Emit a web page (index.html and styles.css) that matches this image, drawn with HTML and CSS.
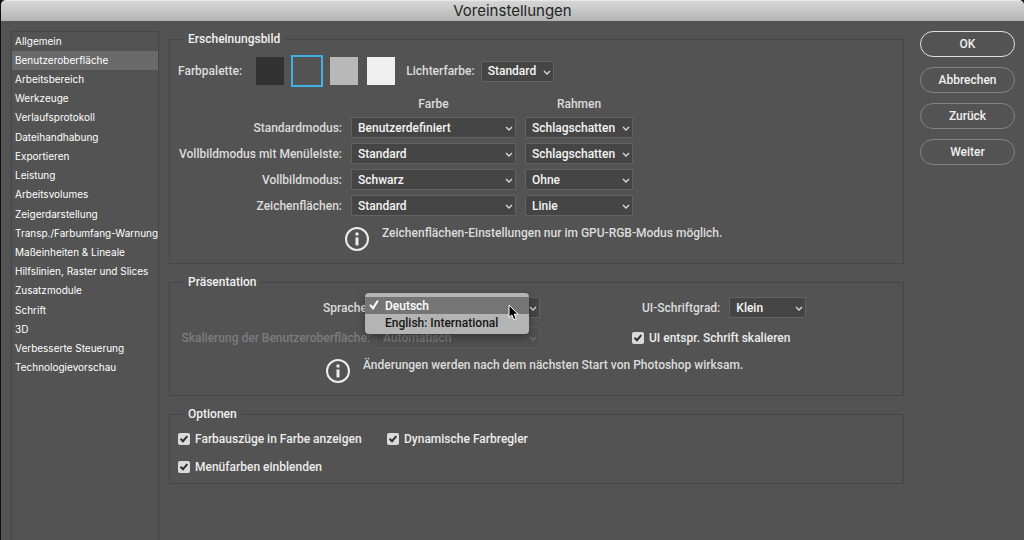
FILE: index.html
```html
<!DOCTYPE html>
<html lang="de">
<head>
<meta charset="utf-8">
<title>Voreinstellungen</title>
<link rel="stylesheet" href="styles.css">
</head>
<body>
<div class="dialog">
  <header class="titlebar"><h1 class="title">Voreinstellungen</h1></header>
  <div class="content">
    <nav class="sidebar">
      <ul class="categories">
        <li><a href="#">Allgemein</a></li>
        <li><a href="#" class="active" aria-current="page">Benutzeroberfläche</a></li>
        <li><a href="#">Arbeitsbereich</a></li>
        <li><a href="#">Werkzeuge</a></li>
        <li><a href="#">Verlaufsprotokoll</a></li>
        <li><a href="#">Dateihandhabung</a></li>
        <li><a href="#">Exportieren</a></li>
        <li><a href="#">Leistung</a></li>
        <li><a href="#">Arbeitsvolumes</a></li>
        <li><a href="#">Zeigerdarstellung</a></li>
        <li><a href="#">Transp./Farbumfang-Warnung</a></li>
        <li><a href="#">Maßeinheiten &amp; Lineale</a></li>
        <li><a href="#">Hilfslinien, Raster und Slices</a></li>
        <li><a href="#">Zusatzmodule</a></li>
        <li><a href="#">Schrift</a></li>
        <li><a href="#">3D</a></li>
        <li><a href="#">Verbesserte Steuerung</a></li>
        <li><a href="#">Technologievorschau</a></li>
      </ul>
    </nav>

    <main class="panels">
      <fieldset class="panel">
        <legend>Erscheinungsbild</legend>
        <div class="palette-row">
          <span id="palette">Farbpalette:</span>
          <div class="swatches" role="radiogroup" aria-labelledby="palette">
            <input type="radio" name="palette" class="swatch swatch-black" aria-labelledby="palette">
            <input type="radio" name="palette" class="swatch swatch-dark" aria-labelledby="palette" checked>
            <input type="radio" name="palette" class="swatch swatch-light" aria-labelledby="palette">
            <input type="radio" name="palette" class="swatch swatch-white" aria-labelledby="palette">
          </div>
          <label for="highlight">Lichterfarbe:</label>
          <select id="highlight" class="select-short"><option>Standard</option></select>
        </div>
        <div class="modes">
          <span></span><span class="head" id="farbe">Farbe</span><span class="head" id="rahmen">Rahmen</span>
          <label for="m1">Standardmodus:</label>
          <select id="m1"><option>Benutzerdefiniert</option></select>
          <select aria-labelledby="rahmen"><option>Schlagschatten</option></select>
          <label for="m2">Vollbildmodus mit Menüleiste:</label>
          <select id="m2"><option>Standard</option></select>
          <select aria-labelledby="rahmen"><option>Schlagschatten</option></select>
          <label for="m3">Vollbildmodus:</label>
          <select id="m3"><option>Schwarz</option></select>
          <select aria-labelledby="rahmen"><option>Ohne</option></select>
          <label for="m4">Zeichenflächen:</label>
          <select id="m4"><option>Standard</option></select>
          <select aria-labelledby="rahmen"><option>Linie</option></select>
        </div>
        <div class="info info-artboards">
          <svg class="info-icon" viewBox="0 0 24 24" aria-hidden="true"><circle cx="12" cy="12" r="11"/><path d="M12 10.400v8"/><circle class="dot" cx="12" cy="7" r="1.700"/></svg>
          <p>Zeichenflächen-Einstellungen nur im GPU-RGB-Modus möglich.</p>
        </div>
      </fieldset>

      <fieldset class="panel">
        <legend>Präsentation</legend>
        <div class="presentation">
          <div class="language">
            <label for="lang">Sprache:</label>
            <div class="language-field">
              <select id="lang"><option>Deutsch</option><option>English: International</option></select>
              <div class="menu" role="menu">
                <button type="button" class="menu-item current" role="menuitemradio" aria-checked="true">
                  <svg class="tick" viewBox="0 0 10 10" aria-hidden="true"><path d="M1.500 5.400 4 8.400 8.400 1.400"/></svg>Deutsch</button>
                <button type="button" class="menu-item" role="menuitemradio" aria-checked="false">English: International</button>
                <svg class="cursor" viewBox="0 0 12 18" aria-hidden="true"><path d="M1 1v12.500l2.800-2.500 2 4.600 2.400-1-2-4.400H10z"/></svg>
              </div>
            </div>
            <label for="scale" class="disabled">Skalierung der Benutzeroberfläche:</label>
            <select id="scale" disabled><option>Automatisch</option></select>
          </div>
          <div class="font-size">
            <div class="font-row">
              <label for="size">UI-Schriftgrad:</label>
              <select id="size"><option>Klein</option></select>
            </div>
            <label class="check"><input type="checkbox" checked>UI entspr. Schrift skalieren</label>
          </div>
        </div>
        <div class="info info-restart">
          <svg class="info-icon" viewBox="0 0 24 24" aria-hidden="true"><circle cx="12" cy="12" r="11"/><path d="M12 10.400v8"/><circle class="dot" cx="12" cy="7" r="1.700"/></svg>
          <p>Änderungen werden nach dem nächsten Start von Photoshop wirksam.</p>
        </div>
      </fieldset>

      <fieldset class="panel">
        <legend>Optionen</legend>
        <div class="options">
          <label class="check"><input type="checkbox" checked>Farbauszüge in Farbe anzeigen</label>
          <label class="check"><input type="checkbox" checked>Dynamische Farbregler</label>
          <label class="check"><input type="checkbox" checked>Menüfarben einblenden</label>
        </div>
      </fieldset>
    </main>

    <div class="actions">
      <button type="button" class="pill primary">OK</button>
      <button type="button" class="pill">Abbrechen</button>
      <button type="button" class="pill">Zurück</button>
      <button type="button" class="pill">Weiter</button>
    </div>
  </div>
</div>
</body>
</html>
```

FILE: styles.css
```css
* { box-sizing: border-box; }

body {
  margin: 0;
  background: #111;
  color: #dcdcdc;
  font: 500 12px/16px Roboto, "Liberation Sans", sans-serif;
}

button, select, input { font: inherit; margin: 0; }
p { margin: 0; }

.dialog {
  display: flex;
  flex-direction: column;
  min-height: 100vh;
  margin-left: 1px;
  background: #535353;
  border-radius: 5px 5px 0 0;
  overflow: hidden;
}

.titlebar {
  height: 21px;
  background: linear-gradient(#d6d6d6, #b4b4b4);
  border-top: 1px solid #e8e8e8;
  text-align: center;
}
.title { margin: 0; font: 400 15px/19px Inter, "Liberation Sans", sans-serif; color: #252525; }

.content {
  flex: 1;
  display: grid;
  grid-template-columns: 148px minmax(0, 1fr) 95px;
  padding: 10px 9px 0 10px;
}

/* Category list */
.sidebar { border: 1px solid #464646; border-bottom: 0; }
.categories {
  display: grid;
  grid-template-columns: minmax(0, 1fr);
  grid-auto-rows: 1fr;
  min-height: 346px;
  margin: 0;
  padding: 0;
  list-style: none;
  font-family: Inter, "Liberation Sans", sans-serif;
  font-size: 10px;
  font-weight: 400;
}
.categories a {
  display: flex;
  align-items: center;
  height: 100%;
  padding: 0 0 2px 3px;
  color: #fff;
  text-decoration: none;
  white-space: nowrap;
}
.categories .active { background: #6a6a6a; }

/* Panels */
.panels { display: flex; flex-direction: column; gap: 10px; padding: 0 16px 0 10px; }
.panel { min-width: 0; margin: 0; padding: 0 8px; border: 1px solid #464646; }
.panel legend { margin-left: 5px; padding: 0 5px; color: #f0f0f0; }

select {
  appearance: none;
  width: 100%;
  height: 21px;
  padding: 0 14px 0 6px;
  border: 1px solid #626262;
  border-radius: 1px;
  color: #f4f4f4;
  background: #454545 url("data:image/svg+xml,%3Csvg xmlns='http://www.w3.org/2000/svg' width='8' height='6' fill='none' stroke='%23dcdcdc' stroke-width='1.300'%3E%3Cpath d='M1 1l3 3 3-3'/%3E%3C/svg%3E") no-repeat right 2px top 8px;
}
select:disabled { color: #7a7a7a; background-color: #505050; border-color: #5a5a5a; opacity: 1; }
#scale { background-image: url("data:image/svg+xml,%3Csvg xmlns='http://www.w3.org/2000/svg' width='8' height='6' fill='none' stroke='%23707070' stroke-width='1.300'%3E%3Cpath d='M1 1l3 3 3-3'/%3E%3C/svg%3E"); }

.palette-row { display: flex; align-items: center; padding-top: 10px; }
.swatches { display: flex; gap: 9px; margin: 0 11px 0 14px; }
.swatch { appearance: none; width: 28px; height: 28px; }
.swatch:checked { outline: 2px solid #3fb0e4; }
.swatch-black { background: #323232; }
.swatch-dark { background: #535353; }
.swatch-light { background: #b8b8b8; }
.swatch-white { background: #f0f0f0; }
.select-short { width: 73px; margin-left: 6px; }

.modes {
  display: grid;
  grid-template-columns: 164px 165px 108px;
  gap: 5px 9px;
  align-items: center;
  padding-top: 11px;
}
.modes label { text-align: right; white-space: nowrap; }
.head { text-align: center; }

.info { display: flex; gap: 13px; }
.info p { line-height: 12px; }
.info-icon { flex: none; width: 24px; height: 24px; fill: none; stroke: #ececec; stroke-width: 2; }
.info-icon path { stroke-width: 3; }
.info-icon .dot { fill: #ececec; stroke: none; }
.info-artboards { padding: 11px 0 12px 167px; }
.info-restart { padding: 11px 0 12px 148px; }

.presentation { display: flex; gap: 92px; padding-top: 7px; }
.language {
  display: grid;
  grid-template-columns: 192px 164px;
  gap: 9px 6px;
  align-items: center;
}
.language label { text-align: right; white-space: nowrap; }
.language .disabled { color: #7c7c7c; }
.language-field { position: relative; display: flex; }
.font-size { display: flex; flex-direction: column; align-items: flex-start; gap: 9px; }
.font-row { display: flex; align-items: center; gap: 9px; padding-left: 10px; white-space: nowrap; }
.font-row select { width: 77px; }

/* Open language menu */
.menu {
  position: absolute;
  top: -4px;
  left: -11px;
  width: 164px;
  padding: 4px 0 3px;
  border-radius: 4px;
  background: #b4b4b4;
  box-shadow: 0 3px 8px rgba(0, 0, 0, .35);
}
.menu-item {
  position: relative;
  display: block;
  width: 100%;
  height: 17px;
  padding: 0 0 0 20px;
  border: 0;
  background: none;
  color: #161616;
  line-height: 18px;
  text-align: left;
}
.menu-item.current { background: #757575; color: #fff; }
.tick { position: absolute; left: 4px; top: 3px; width: 10px; height: 10px; fill: none; stroke: #fff; stroke-width: 2; stroke-linecap: round; }
.cursor { position: absolute; left: 143px; top: 11px; width: 12px; height: 18px; fill: #000; stroke: #fff; stroke-width: 1; }

/* Check boxes */
.check { display: flex; align-items: center; gap: 5px; min-height: 21px; color: #ececec; white-space: nowrap; }
.check input {
  appearance: none;
  flex: none;
  width: 12px;
  height: 12px;
  border-radius: 2px;
  background: #dadada;
}
.check input:checked {
  background-image: url("data:image/svg+xml,%3Csvg xmlns='http://www.w3.org/2000/svg' viewBox='0 0 12 12' fill='none' stroke='%23303030' stroke-width='2'%3E%3Cpath d='M2.500 5.700l2.500 2.500 4.300-5'/%3E%3C/svg%3E");
}
.options {
  display: grid;
  grid-template-columns: 185px auto;
  justify-content: start;
  gap: 7px 24px;
  padding: 6px 0;
}

/* Dialog buttons */
.actions { display: flex; flex-direction: column; gap: 10px; }
.pill {
  height: 26px;
  padding: 0;
  border: 1px solid #828282;
  border-radius: 13px;
  background: none;
  color: #f0f0f0;
}
.primary { border-color: #e0e0e0; }
```
